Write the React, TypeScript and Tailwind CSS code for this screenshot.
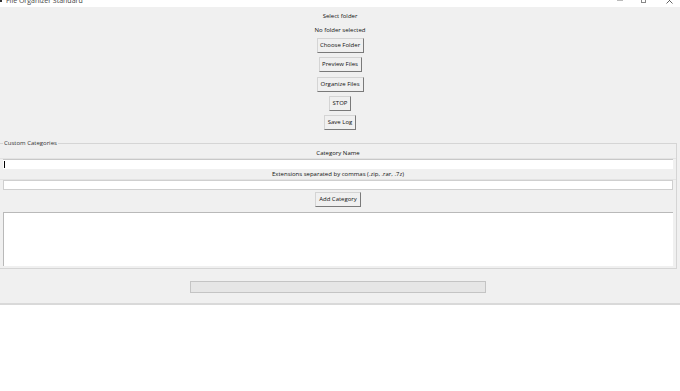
import React from "react";

function Btn({ children, w }: { children: React.ReactNode; w: string }) {
  return (
    <div
      className={`${w} h-[15px] flex items-center justify-center bg-[#f0f0f0] border border-[#d4d4d4] border-r-[#7a7a7a] border-b-[#7a7a7a] text-[6px] text-[#111]`}
    >
      {children}
    </div>
  );
}

export default function App() {
  return (
    <div
      className="w-[680px] h-[391px] bg-[#f0f0f0] flex flex-col overflow-hidden text-[#222]"
      style={{ fontFamily: '"Open Sans", "Liberation Sans", sans-serif' }}
    >
      {/* title bar */}
      <div className="h-[7px] bg-white flex items-end relative">
        <div className="absolute left-[6px] top-[-4px] text-[7px] text-[#444] leading-[10px]">
          File Organizer Standard
        </div>
        <div className="absolute left-[0px] top-[-2px] w-[2px] h-[4px] bg-[#333]" />
        <div className="absolute left-[617px] top-[0px] w-[6px] h-[1px] bg-[#bbb]" />
        <div className="absolute left-[641px] top-[-2px] w-[5px] h-[5px] border border-[#888]" />
        <svg className="absolute left-[666px] top-[-3px]" width="7" height="7" viewBox="0 0 7 7">
          <path d="M0.5 0.5 L6.5 6.5 M6.5 0.5 L0.5 6.5" stroke="#555" strokeWidth="0.9" />
        </svg>
      </div>

      {/* top controls */}
      <div className="flex flex-col items-center pt-[5px]">
        <div className="text-[6px] leading-[8px] h-[8px] text-[#111]">Select folder</div>
        <div className="mt-[6px] text-[6px] leading-[8px] h-[8px] text-[#111]">No folder selected</div>
        <div className="mt-[4px] flex flex-col items-center gap-[4.25px]">
          <Btn w="w-[47px]">Choose Folder</Btn>
          <Btn w="w-[43px]">Preview Files</Btn>
          <Btn w="w-[47px]">Organize Files</Btn>
          <Btn w="w-[22px]">STOP</Btn>
          <Btn w="w-[32px]">Save Log</Btn>
        </div>
      </div>

      {/* labelframe */}
      <div className="relative mt-[13px] mr-[3px] h-[126px] border border-[#d5d5d5] border-l-0 flex flex-col">
        <div className="absolute left-[3px] top-[-5px] bg-[#f0f0f0] px-[1px] text-[6px] leading-[8px] text-[#333]">
          Custom Categories
        </div>
        <div className="mt-[5px] h-[10px] flex items-center justify-center text-[6px] text-[#111] border-b border-[#e3e3e3]">
          Category Name
        </div>
        <div className="mx-[3px] h-[10px] bg-white border-t border-[#c8c8c8] relative">
          <div className="absolute left-[1px] top-[1px] w-[1px] h-[7px] bg-black" />
        </div>
        <div className="mt-[1px] h-[10px] flex items-center justify-center text-[6px] text-[#111] border-b border-[#e3e3e3]">
          Extensions separated by commas (.zip, .rar, .7z)
        </div>
        <div className="mx-[3px] h-[10px] bg-white border border-[#cfcfcf]" />
        <div className="mt-[2px] flex justify-center">
          <Btn w="w-[46px]">Add Category</Btn>
        </div>
        <div className="mt-[5px] mx-[3px] h-[54px] bg-white border-t border-l border-[#b9b9b9]" />
      </div>

      {/* progress */}
      <div className="flex justify-center mt-[12px] pr-[4px]">
        <div className="w-[296px] h-[12px] bg-[#e6e6e6] border border-[#c4c4c4]" />
      </div>

      {/* log text */}
      <div className="mt-[10px] flex-1 bg-white border-t-2 border-[#d9d9d9]" />
    </div>
  );
}
